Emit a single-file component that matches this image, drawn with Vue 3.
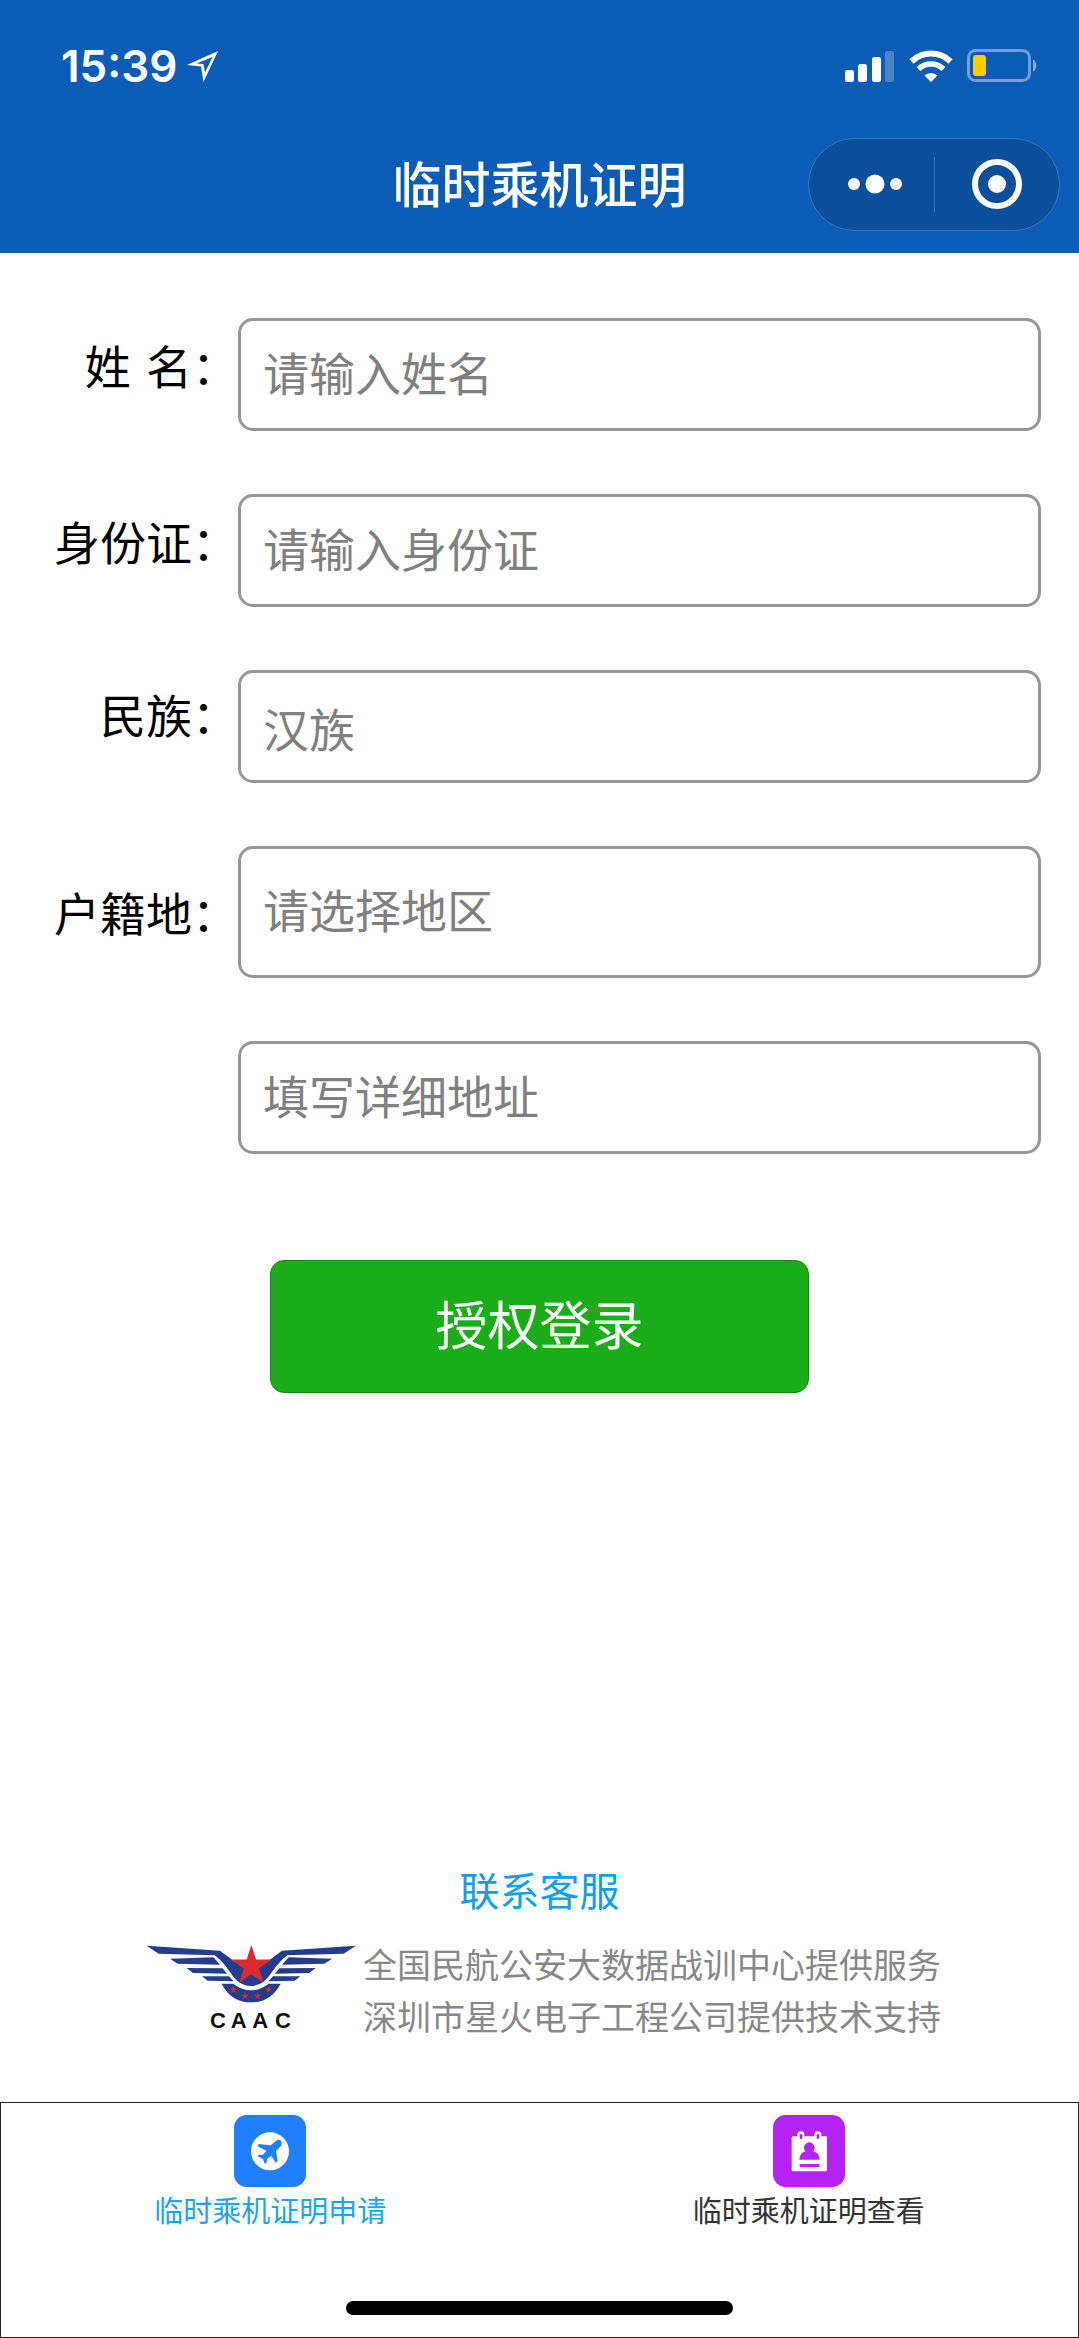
<script setup>
import { ref } from 'vue'

const form = ref({
  name: '',
  idCard: '',
  nation: '',
  region: '',
  address: ''
})

// 表单各行, 详细地址没有文字标签
const fields = [
  { key: 'name', label: '姓\u2004名：', placeholder: '请输入姓名' },
  { key: 'idCard', label: '身份证：', placeholder: '请输入身份证' },
  { key: 'nation', label: '民族：', placeholder: '汉族', type: 'picker' },
  { key: 'region', label: '户籍地：', placeholder: '请选择地区', type: 'tall' },
  { key: 'address', label: '', placeholder: '填写详细地址' }
]

const tabs = [
  { key: 'apply', text: '临时乘机证明申请' },
  { key: 'view', text: '临时乘机证明查看' }
]
const activeTab = ref('apply')

// 五角星的顶点
const starPoints = (cx, cy, r) => {
  const points = []
  for (let i = 0; i < 10; i++) {
    const radius = i % 2 === 0 ? r : r * 0.382
    const angle = (Math.PI / 5) * i - Math.PI / 2
    points.push(`${(cx + radius * Math.cos(angle)).toFixed(1)},${(cy + radius * Math.sin(angle)).toFixed(1)}`)
  }
  return points.join(' ')
}

const smallStars = [
  [312, 209],
  [347, 228],
  [385, 228],
  [418, 209]
]
</script>

<template>
  <div class="page" lang="zh-CN">
    <header class="header">
      <div class="status">
        <div class="clock">
          <span>15:39</span>
          <svg width="32" height="32" viewBox="0 0 32 32">
            <path
              fill="#fff"
              fill-rule="evenodd"
              d="M31 1 L0 15 L14 16.500 L16.500 32 Z M25.500 7 L18 22.500 L16.500 14 L9.500 13.500 Z"
            />
          </svg>
        </div>
        <div class="signals">
          <svg width="50" height="32" viewBox="0 0 50 32" fill="#fff">
            <rect x="0" y="20" width="9" height="12" rx="2.500" />
            <rect x="13" y="14" width="9" height="18" rx="2.500" />
            <rect x="27" y="7" width="9" height="25" rx="2.500" />
            <rect x="40" y="1" width="9" height="31" rx="2.500" opacity="0.25" />
          </svg>
          <svg width="44" height="32" viewBox="0 0 44 32">
            <path d="M2.500 11.500 A28 28 0 0 1 41.500 11.500" fill="none" stroke="#fff" stroke-width="6" />
            <path d="M9.500 19 A18 18 0 0 1 34.500 19" fill="none" stroke="#fff" stroke-width="5.500" />
            <path d="M22 32 L15.500 25.500 A9.500 9.500 0 0 1 28.500 25.500 Z" fill="#fff" />
          </svg>
          <svg width="71" height="34" viewBox="0 0 71 34">
            <rect x="1.500" y="1.500" width="61" height="30" rx="7" fill="none" stroke="#fff" stroke-opacity="0.42" stroke-width="3" />
            <rect x="6" y="6" width="13" height="21" rx="3" fill="#fc0" />
            <path d="M66 10.500 A7 7 0 0 1 66 22.500 Z" fill="#fff" opacity="0.5" />
          </svg>
        </div>
      </div>
      <div class="nav">
        <h1>临时乘机证明</h1>
        <div class="capsule">
          <button type="button" aria-label="更多">
            <svg width="56" height="20" viewBox="0 0 56 20" fill="#fff">
              <circle cx="7" cy="10" r="6" />
              <circle cx="28" cy="10" r="9.500" />
              <circle cx="49" cy="10" r="6" />
            </svg>
          </button>
          <button type="button" aria-label="关闭">
            <svg width="50" height="50" viewBox="0 0 50 50">
              <circle cx="25" cy="25" r="22" fill="none" stroke="#fff" stroke-width="6" />
              <circle cx="25" cy="25" r="9" fill="#fff" />
            </svg>
          </button>
        </div>
      </div>
    </header>

    <form class="form" @submit.prevent>
      <div v-for="field in fields" :key="field.key" class="row" :class="field.type">
        <label :for="field.key">{{ field.label }}</label>
        <input
          :id="field.key"
          v-model="form[field.key]"
          type="text"
          :placeholder="field.placeholder"
          :aria-label="field.label ? null : field.placeholder"
        />
      </div>
      <button type="submit" class="submit">授权登录</button>
    </form>

    <footer class="support">
      <a href="#" class="contact">联系客服</a>
      <div class="provider">
        <svg class="logo" width="211" height="94" viewBox="50 72 633 282">
          <g fill="#233c8c">
            <path d="M52 77 L272 92 Q292 106 314 124 L365 140 L416 124 Q438 106 458 92 L680 77 L643 101 L474 106 Q452 122 428 156 Q402 198 365 198 Q328 198 302 156 Q278 122 256 106 L88 101 Z" />
            <path d="M122 116 L252 112 L272 134 L145 131 Z" />
            <path d="M172 144 L280 145 L293 161 L191 159 Z" />
            <path d="M218 169 L299 169 L313 184 L235 182 Z" />
            <path d="M608 116 L478 112 L458 134 L585 131 Z" />
            <path d="M559 144 L450 145 L437 161 L540 159 Z" />
            <path d="M513 169 L431 169 L417 184 L496 182 Z" />
            <path d="M277 191 L312 191 Q338 211 365 211 Q392 211 418 191 L454 191 Q425 247 365 247 Q305 247 277 191 Z" />
          </g>
          <g fill="#dd2a30">
            <polygon :points="starPoints(366, 138, 63)" />
            <polygon v-for="[x, y] in smallStars" :key="x" :points="starPoints(x, y, 12)" />
          </g>
          <text class="caac" x="242 304 369 437" y="324">CAAC</text>
        </svg>
        <p>全国民航公安大数据战训中心提供服务<br />深圳市星火电子工程公司提供技术支持</p>
      </div>
    </footer>

    <nav class="tabbar">
      <div class="tabs">
        <button
          v-for="tab in tabs"
          :key="tab.key"
          type="button"
          :class="{ active: tab.key === activeTab }"
          @click="activeTab = tab.key"
        >
          <svg v-if="tab.key === 'apply'" width="72" height="72" viewBox="0 0 216 216">
            <rect width="216" height="216" rx="38" fill="#1f7fff" />
            <circle cx="108" cy="109" r="57" fill="#fff" />
            <path
              fill="#1f7fff"
              d="M141 77 Q146 86 140 94 L126 109 L131 139 L125 143 L112 122 L99 132 L98 143 L92 146 L87 132 L71 124 L74 119 L86 120 L97 107 L71 94 L74 87 L110 91 L126 78 Q134 71 141 77 Z"
            />
          </svg>
          <svg v-else width="72" height="72" viewBox="0 0 216 216">
            <rect width="216" height="216" rx="38" fill="#b323f5" />
            <path fill="#fff" d="M60 64 H158 Q162 64 162 68 V165 Q162 169 158 169 H60 Q56 169 56 165 V68 Q56 64 60 64 Z" />
            <rect x="73" y="49" width="21" height="27" rx="10" fill="#fff" />
            <rect x="124" y="49" width="21" height="27" rx="10" fill="#fff" />
            <rect x="80" y="57" width="8" height="15" rx="4" fill="#b323f5" />
            <rect x="131" y="57" width="8" height="15" rx="4" fill="#b323f5" />
            <circle cx="109" cy="98" r="16" fill="#b323f5" />
            <path fill="#b323f5" d="M79 134 Q79 110 103 108 H116 Q139 110 140 134 Z" />
            <rect x="80" y="147" width="60" height="9" rx="3" fill="#b323f5" />
          </svg>
          <span>{{ tab.text }}</span>
        </button>
      </div>
      <div class="indicator"></div>
    </nav>
  </div>
</template>

<style>
body {
  margin: 0;
}
</style>

<style scoped>
.page {
  display: flex;
  flex-direction: column;
  min-height: 100vh;
  background: #fff;
  font-family: 'Noto Sans CJK SC', sans-serif;
}

svg {
  display: block;
  flex: none;
}

button {
  margin: 0;
  padding: 0;
  border: 0;
  background: none;
  font-family: inherit;
}

.header {
  padding-bottom: 17px;
  background: #0b5cb7;
  color: #fff;
}

.status {
  display: flex;
  justify-content: space-between;
  align-items: center;
  height: 132px;
  padding: 0 41px 0 61px;
}

.clock {
  display: flex;
  align-items: center;
  gap: 10px;
  font: 600 44px/1 Inter, sans-serif;
}

.signals {
  display: flex;
  align-items: center;
  gap: 14px;
}

.nav {
  display: grid;
  grid-template-columns: 1fr auto 1fr;
  align-items: center;
  height: 104px;
}

.nav h1 {
  grid-column: 2;
  margin: 0;
  padding-bottom: 4px;
  font-size: 49px;
  font-weight: 500;
  line-height: 60px;
}

.capsule {
  display: flex;
  justify-self: end;
  box-sizing: border-box;
  width: 252px;
  height: 93px;
  margin-right: 19px;
  border: 1px solid #3b76ba;
  border-radius: 47px;
  background: #094f9c;
}

.capsule button {
  display: flex;
  flex: 1;
  align-items: center;
  justify-content: center;
}

.capsule button:first-child svg {
  margin-left: 6px;
}

.capsule button + button::before {
  content: '';
  width: 1px;
  height: 55px;
  margin-right: 37px;
  background: #3b76ba;
}

.capsule button + button {
  justify-content: flex-start;
}

.form {
  display: flex;
  flex-direction: column;
  gap: 63px;
  padding: 65px 38px 0 0;
}

.row {
  display: flex;
  align-items: center;
}

.row label {
  flex: none;
  width: 238px;
  padding-bottom: 22px;
  font-size: 46px;
  line-height: 60px;
  text-align: right;
  white-space: nowrap;
}

.row input {
  flex: 1;
  min-width: 0;
  box-sizing: border-box;
  height: 113px;
  padding: 0 22px 8px;
  border: 3px solid #969696;
  border-radius: 15px;
  outline: none;
  background: #fff;
  font-family: inherit;
  font-size: 46px;
  color: #000;
}

.row input::placeholder {
  color: #808080;
  opacity: 1;
}

.row.picker label {
  padding-bottom: 28px;
}

.row.picker input {
  padding-bottom: 0;
}

.row.tall label {
  padding-bottom: 2px;
}

.row.tall input {
  height: 132px;
}

.submit {
  box-sizing: border-box;
  width: 50vw;
  height: 133px;
  margin: 43px 0 0 25vw;
  padding-bottom: 8px;
  border: 1px solid #158a14;
  border-radius: 14px;
  background: #1aad19;
  color: #fff;
  font-size: 52px;
}

.support {
  display: flex;
  flex-direction: column;
  align-items: center;
  margin-top: auto;
  padding: 40px 0 60px;
}

.contact {
  font-size: 40px;
  line-height: 60px;
  color: #10a0ea;
  text-decoration: none;
}

.provider {
  display: flex;
  align-items: flex-start;
  gap: 6px;
  margin-top: 19px;
  padding-left: 8px;
}

.provider p {
  margin: 0;
  font-size: 34px;
  line-height: 52px;
  color: #888;
}

.logo {
  margin-top: 6px;
  overflow: visible;
}

.caac {
  font: bold 66px 'Liberation Sans', sans-serif;
  fill: #111;
}

.tabbar {
  display: flex;
  flex-direction: column;
  align-items: center;
  justify-content: space-between;
  box-sizing: border-box;
  height: 236px;
  padding: 12px 0 22px;
  border: 1px solid #222;
}

.tabs {
  display: flex;
  align-self: stretch;
}

.tabs button {
  display: flex;
  flex: 1;
  flex-direction: column;
  align-items: center;
  color: #333;
  font-size: 29px;
  line-height: 44px;
}

.tabs button.active {
  color: #1ba5e8;
}

.indicator {
  width: 36%;
  height: 14px;
  border-radius: 7px;
  background: #000;
}
</style>
